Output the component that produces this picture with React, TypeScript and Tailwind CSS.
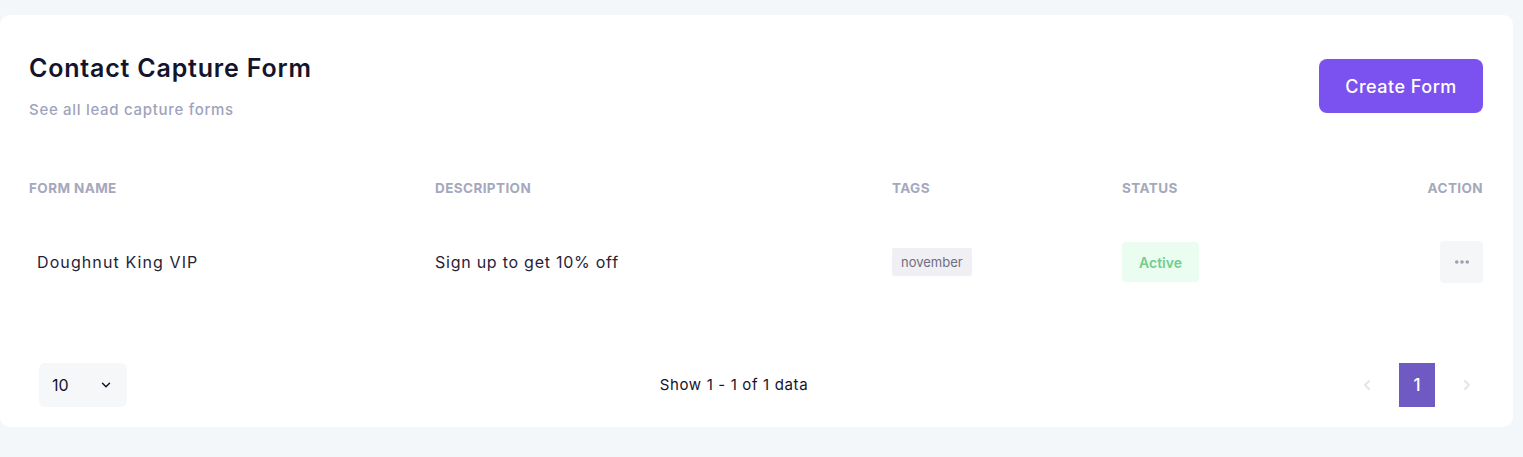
import { ChevronDown, ChevronLeft, ChevronRight, MoreHorizontal } from 'lucide-react'

const sans = "font-['Inter','Noto_Sans',sans-serif]"
const alt = "font-['Inter','Liberation_Sans',sans-serif]"

export default function App() {
  return (
    <div className={`min-h-[457px] w-[1523px] bg-[#f4f7fa] pt-[15px] ${sans}`}>
      <div className="w-[1513px] rounded-[10px] bg-white pb-[20px]">
        {/* header */}
        <div className="flex items-start justify-between pl-[29px] pr-[30px] pt-[38px]">
          <div>
            <h1 className="text-[25px] font-semibold leading-[30px] tracking-[0.8px] text-[#14142b]">Contact Capture Form</h1>
            <p className="mt-[17px] text-[15px] font-medium leading-[20px] tracking-[0.7px] text-[#a0a3bd]">See all lead capture forms</p>
          </div>
          <button className="mt-[6px] h-[54px] w-[164px] rounded-[8px] bg-[#7b52f0] text-[18px] font-medium tracking-[0.5px] text-white">
            Create Form
          </button>
        </div>

        {/* table */}
        <div className="mt-[58px] pl-[29px] pr-[30px]">
          <div className={`grid grid-cols-[406px_457px_230px_1fr] items-center text-[13.5px] font-bold uppercase tracking-[0.4px] text-[#a5a8bd] ${alt}`}>
            <span>Form Name</span>
            <span>Description</span>
            <span>Tags</span>
            <div className="flex justify-between">
              <span>Status</span>
              <span>Action</span>
            </div>
          </div>
          <div className="mt-[42px] grid h-[44px] grid-cols-[406px_457px_230px_1fr] items-center">
            <span className="pl-[8px] text-[16px] tracking-[1.1px] text-[#262338]">Doughnut King VIP</span>
            <span className="text-[16px] tracking-[0.75px] text-[#262338]">Sign up to get 10% off</span>
            <div>
              <span className={`inline-flex h-[28px] items-center rounded-[2px] bg-[#f0f0f4] px-[9px] text-[13px] text-[#6e6e80] ${alt}`}>
                november
              </span>
            </div>
            <div className="flex items-center justify-between">
              <span className={`inline-flex h-[40px] w-[77px] items-center justify-center rounded-[4px] bg-[#ebfcf1] text-[14px] font-semibold text-[#6fcf8b] ${alt}`}>
                Active
              </span>
              <button className="flex h-[42px] w-[43px] items-center justify-center rounded-[4px] bg-[#f5f6f8] text-[#9a9cb0]">
                <MoreHorizontal size={18} strokeWidth={2.75} />
              </button>
            </div>
          </div>
        </div>

        {/* footer */}
        <div className="mt-[79px] flex items-center justify-between pl-[39px] pr-[30px]">
          <div className="flex h-[44px] w-[88px] items-center justify-between rounded-[6px] bg-[#f5f7f9] pl-[13px] pr-[14px] text-[16px] text-[#14142b]">
            <span>10</span>
            <ChevronDown size={14} strokeWidth={2.5} />
          </div>
          <span className="mr-[10px] text-[15px] tracking-[0.65px] text-[#14142b]">Show 1 - 1 of 1 data</span>
          <div className="flex items-center gap-[16px]">
            <span className="flex w-[32px] justify-center text-[#e3e4ec]">
              <ChevronLeft size={16} strokeWidth={3} />
            </span>
            <span className="flex h-[44px] w-[36px] items-center justify-center bg-[#6f5ac4] text-[17px] font-medium text-white">1</span>
            <span className="flex w-[32px] justify-center text-[#e3e4ec]">
              <ChevronRight size={16} strokeWidth={3} />
            </span>
          </div>
        </div>
      </div>
    </div>
  )
}
